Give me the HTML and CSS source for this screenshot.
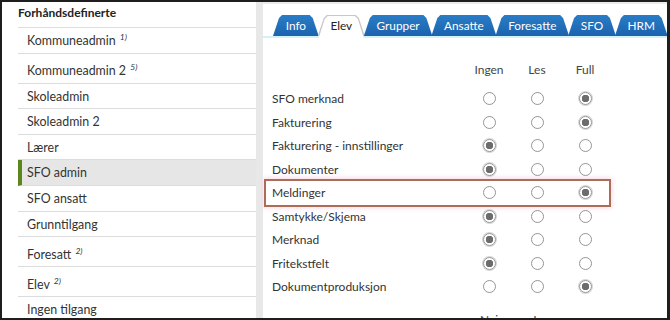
FILE: index.html
```html
<!DOCTYPE html>
<html lang="no">
<head>
  <meta charset="UTF-8">
  <title>Roller og rettigheter</title>
  <link rel="stylesheet" href="styles.css">
</head>
<body>
  <div class="frame">
    <aside class="roles">
      <div class="roles-title">Forhåndsdefinerte</div>
      <ul class="role-list">
        <li class="role">Kommuneadmin <sup>1)</sup></li>
        <li class="role noted">Kommuneadmin 2 <sup>5)</sup></li>
        <li class="role">Skoleadmin</li>
        <li class="role">Skoleadmin 2</li>
        <li class="role">Lærer</li>
        <li class="role active">SFO admin</li>
        <li class="role">SFO ansatt</li>
        <li class="role">Grunntilgang</li>
        <li class="role noted">Foresatt <sup>2)</sup></li>
        <li class="role noted">Elev <sup>2)</sup></li>
        <li class="role">Ingen tilgang</li>
      </ul>
    </aside>
    <div class="gutter"></div>
    <section class="rights">
      <nav class="tabs">
        <span class="tab">Info</span>
        <span class="tab active">Elev</span>
        <span class="tab">Grupper</span>
        <span class="tab">Ansatte</span>
        <span class="tab">Foresatte</span>
        <span class="tab">SFO</span>
        <span class="tab">HRM</span>
      </nav>
      <div class="perm">
        <div class="perm-row head"><span></span><span>Ingen</span><span>Les</span><span>Full</span></div>
        <div class="perm-row"><span class="label">SFO merknad</span><i class="radio"></i><i class="radio"></i><i class="radio on"></i></div>
        <div class="perm-row"><span class="label">Fakturering</span><i class="radio"></i><i class="radio"></i><i class="radio on"></i></div>
        <div class="perm-row"><span class="label">Fakturering - innstillinger</span><i class="radio on"></i><i class="radio"></i><i class="radio"></i></div>
        <div class="perm-row"><span class="label">Dokumenter</span><i class="radio on"></i><i class="radio"></i><i class="radio"></i></div>
        <div class="perm-row marked"><span class="label">Meldinger</span><i class="radio"></i><i class="radio"></i><i class="radio on"></i></div>
        <div class="perm-row"><span class="label">Samtykke/Skjema</span><i class="radio on"></i><i class="radio"></i><i class="radio"></i></div>
        <div class="perm-row"><span class="label">Merknad</span><i class="radio on"></i><i class="radio"></i><i class="radio"></i></div>
        <div class="perm-row"><span class="label">Fritekstfelt</span><i class="radio on"></i><i class="radio"></i><i class="radio"></i></div>
        <div class="perm-row"><span class="label">Dokumentproduksjon</span><i class="radio"></i><i class="radio"></i><i class="radio on"></i></div>
        <div class="perm-row head next"><span></span><span>Nei</span><span>Ja</span><span></span></div>
      </div>
    </section>
  </div>
</body>
</html>
```

FILE: styles.css
```css
html, body {
  margin: 0;
  padding: 0;
  background: #1e1e1e;
}
body {
  width: 670px;
  height: 320px;
  overflow: hidden;
  font-family: Lato, 'Open Sans', sans-serif;
  font-size: 12px;
  color: #333;
}
.frame {
  width: 670px;
  height: 320px;
  box-sizing: border-box;
  border: 2px solid #1e1e1e;
  border-right-width: 3px;
  background: #fff;
  display: flex;
  overflow: hidden;
}

/* left column: role list */
.roles {
  width: 254px;
  flex: none;
  padding-left: 16px;
  box-sizing: border-box;
  background: #fff;
}
.roles-title {
  font-weight: 700;
  color: #222;
  line-height: 16px;
  padding: 3px 0 6px 0;
  border-bottom: 1px solid #dedede;
}
.role-list {
  list-style: none;
  margin: 0;
  padding: 0;
}
.role {
  font-size: 12.4px;
  line-height: 15.6px;
  padding: 5px 0 4px 9px;
  border-bottom: 1px solid #dcdcdc;
  white-space: nowrap;
}
.role.noted { padding-top: 9.4px; }
.role sup {
  font-size: 8.5px;
  font-style: italic;
  line-height: 0;
  vertical-align: 5px;
  margin-left: 1px;
}
.role.active {
  background: #e6e6e6;
  border-left: 4px solid #5c861d;
  padding-left: 5px;
}
.gutter {
  width: 7px;
  flex: none;
  background: #e8e8e8;
}

/* right column: tabs and rights */
.rights {
  flex: 1;
  margin-right: 2px;
  border-right: 1px solid #cfcfcf;
  border-top: 2px solid #ececec;
  background: #fff;
}
.tabs {
  display: flex;
  padding: 11px 0 0 10px;
  border-bottom: 2px solid #d3f1f8;
}
.tab {
  position: relative;
  z-index: 0;
  height: 21px;
  line-height: 22px;
  padding: 0 12.7px;
  margin-right: -1px;
  font-size: 11.8px;
  color: #fff;
  white-space: nowrap;
}
.tab::before,
.tab.active::after {
  content: '';
  position: absolute;
  top: 0;
  left: 0;
  right: 0;
  bottom: 0;
  z-index: -1;
  background: linear-gradient(#2a7cc6, #1b63ae);
  clip-path: polygon(0 100%, 6px 3px, 9px 0, calc(100% - 9px) 0, calc(100% - 6px) 3px, 100% 100%);
}
.tab.active { color: #222; }
.tab.active::before { background: #c8c8c8; }
.tab.active::after {
  top: 1px;
  left: 1px;
  right: 1px;
  bottom: -2px;
  background: #fff;
}

.perm {
  padding: 20px 0 0 9px;
}
.perm-row {
  display: grid;
  grid-template-columns: 193px 48px 48px 48px;
  grid-auto-rows: 23.5px;
  align-items: center;
  justify-items: center;
  width: max-content;
  margin-left: -6px;
  padding-left: 6px;
}
.perm-row .label {
  justify-self: start;
  white-space: nowrap;
}
.perm-row.head {
  color: #444;
  margin-bottom: 5.5px;
}
.perm-row.next { margin-top: 9px; }
.perm-row.marked {
  outline: 2px solid #ad6c55;
  box-shadow: 0 0 5px 3px #f6d9e8;
}
.radio {
  width: 11px;
  height: 11px;
  border-radius: 50%;
  border: 1px solid #959595;
  background: #fff;
  box-sizing: content-box;
  display: block;
}
.radio.on {
  background: radial-gradient(circle, #6c6c6c 0 3.5px, #fff 4px);
  box-shadow: 0 0 0 1px #d6d6d6;
}
```
